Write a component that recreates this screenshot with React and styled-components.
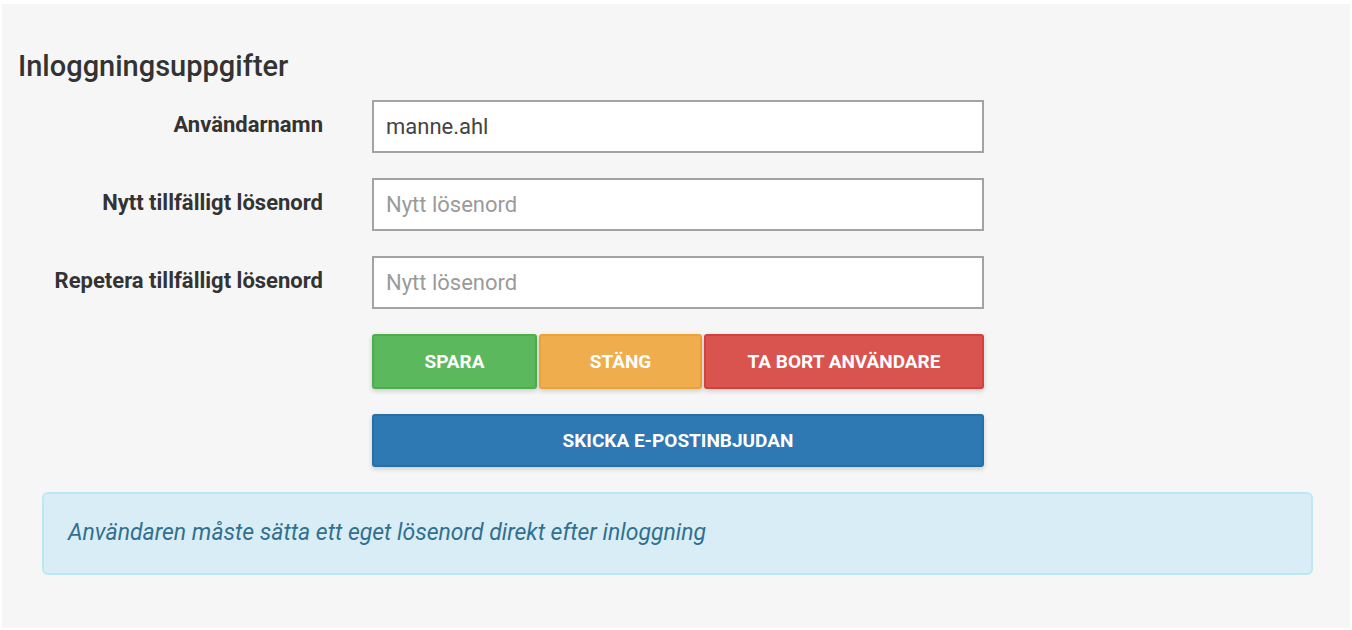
import styled, { createGlobalStyle } from 'styled-components';

const Global = createGlobalStyle`
	html, body {
		margin: 0;
		padding: 0;
		background: #ffffff;
		font-family: Roboto, "Liberation Sans", sans-serif;
	}
`;

const Panel = styled.div`
	margin: 4px 2px 2px 2px;
	height: 624px;
	box-sizing: border-box;
	background: #f6f6f6;
	padding: 45px 16px 0 16px;
	color: #333333;
`;

const Heading = styled.h2`
	margin: 0 0 17px 0;
	font-size: 29px;
	font-weight: 500;
	line-height: 34px;
	color: #333333;
`;

const Form = styled.div`
	display: grid;
	grid-template-columns: 305px 612px;
	column-gap: 49px;
	row-gap: 25px;
`;

const Label = styled.label`
	justify-self: end;
	align-self: center;
	margin-top: -4px;
	font-size: 22px;
	font-weight: 700;
	color: #333333;
`;

const Input = styled.input`
	box-sizing: border-box;
	width: 100%;
	height: 53px;
	padding: 0 12px;
	border: 2px solid #a3a3a3;
	background: #ffffff;
	font-family: Roboto, "Liberation Sans", sans-serif;
	font-size: 22px;
	color: #444444;
	outline: none;
	&::placeholder {
		color: #9a9a9a;
	}
`;

const Actions = styled.div`
	grid-column: 2;
	display: flex;
	flex-direction: column;
	gap: 25px;
`;

const ButtonRow = styled.div`
	display: flex;
	gap: 2px;
`;

const colors = {
	green: ['#5cb85c', '#4cae4c'],
	orange: ['#f0ad4e', '#eea236'],
	red: ['#d9534f', '#d43f3a'],
	blue: ['#2e78b4', '#2a6ea6'],
};

const Button = styled.button`
	box-sizing: border-box;
	height: ${(p) => p.$h || 55}px;
	width: ${(p) => (p.$w ? p.$w + 'px' : '100%')};
	flex: ${(p) => (p.$w ? '0 0 auto' : '1 1 auto')};
	background: ${(p) => colors[p.$c][0]};
	border: 2px solid ${(p) => colors[p.$c][1]};
	border-radius: 3px;
	box-shadow: 0 2px 5px rgba(0, 0, 0, 0.18);
	color: #ffffff;
	font-family: Roboto, "Liberation Sans", sans-serif;
	font-size: 19px;
	font-weight: 700;
	text-transform: uppercase;
	cursor: pointer;
`;

const Info = styled.div`
	margin: 25px 21px 0 24px;
	height: 83px;
	box-sizing: border-box;
	display: flex;
	align-items: center;
	padding: 0 24px 2px 24px;
	background: #d9edf7;
	border: 2px solid #bce8f1;
	border-radius: 6px;
	color: #31708f;
	font-size: 23px;
	font-style: italic;
`;

export default function App() {
	return (
		<>
			<Global />
			<Panel>
				<Heading>Inloggningsuppgifter</Heading>
				<Form>
					<Label>Användarnamn</Label>
					<Input defaultValue="manne.ahl" />
					<Label>Nytt tillfälligt lösenord</Label>
					<Input type="password" placeholder="Nytt lösenord" />
					<Label>Repetera tillfälligt lösenord</Label>
					<Input type="password" placeholder="Nytt lösenord" />
					<Actions>
						<ButtonRow>
							<Button $c="green" $w={165}>Spara</Button>
							<Button $c="orange" $w={163}>Stäng</Button>
							<Button $c="red">Ta bort användare</Button>
						</ButtonRow>
						<Button $c="blue" $h={53}>Skicka e-postinbjudan</Button>
					</Actions>
				</Form>
				<Info>Användaren måste sätta ett eget lösenord direkt efter inloggning</Info>
			</Panel>
		</>
	);
}
